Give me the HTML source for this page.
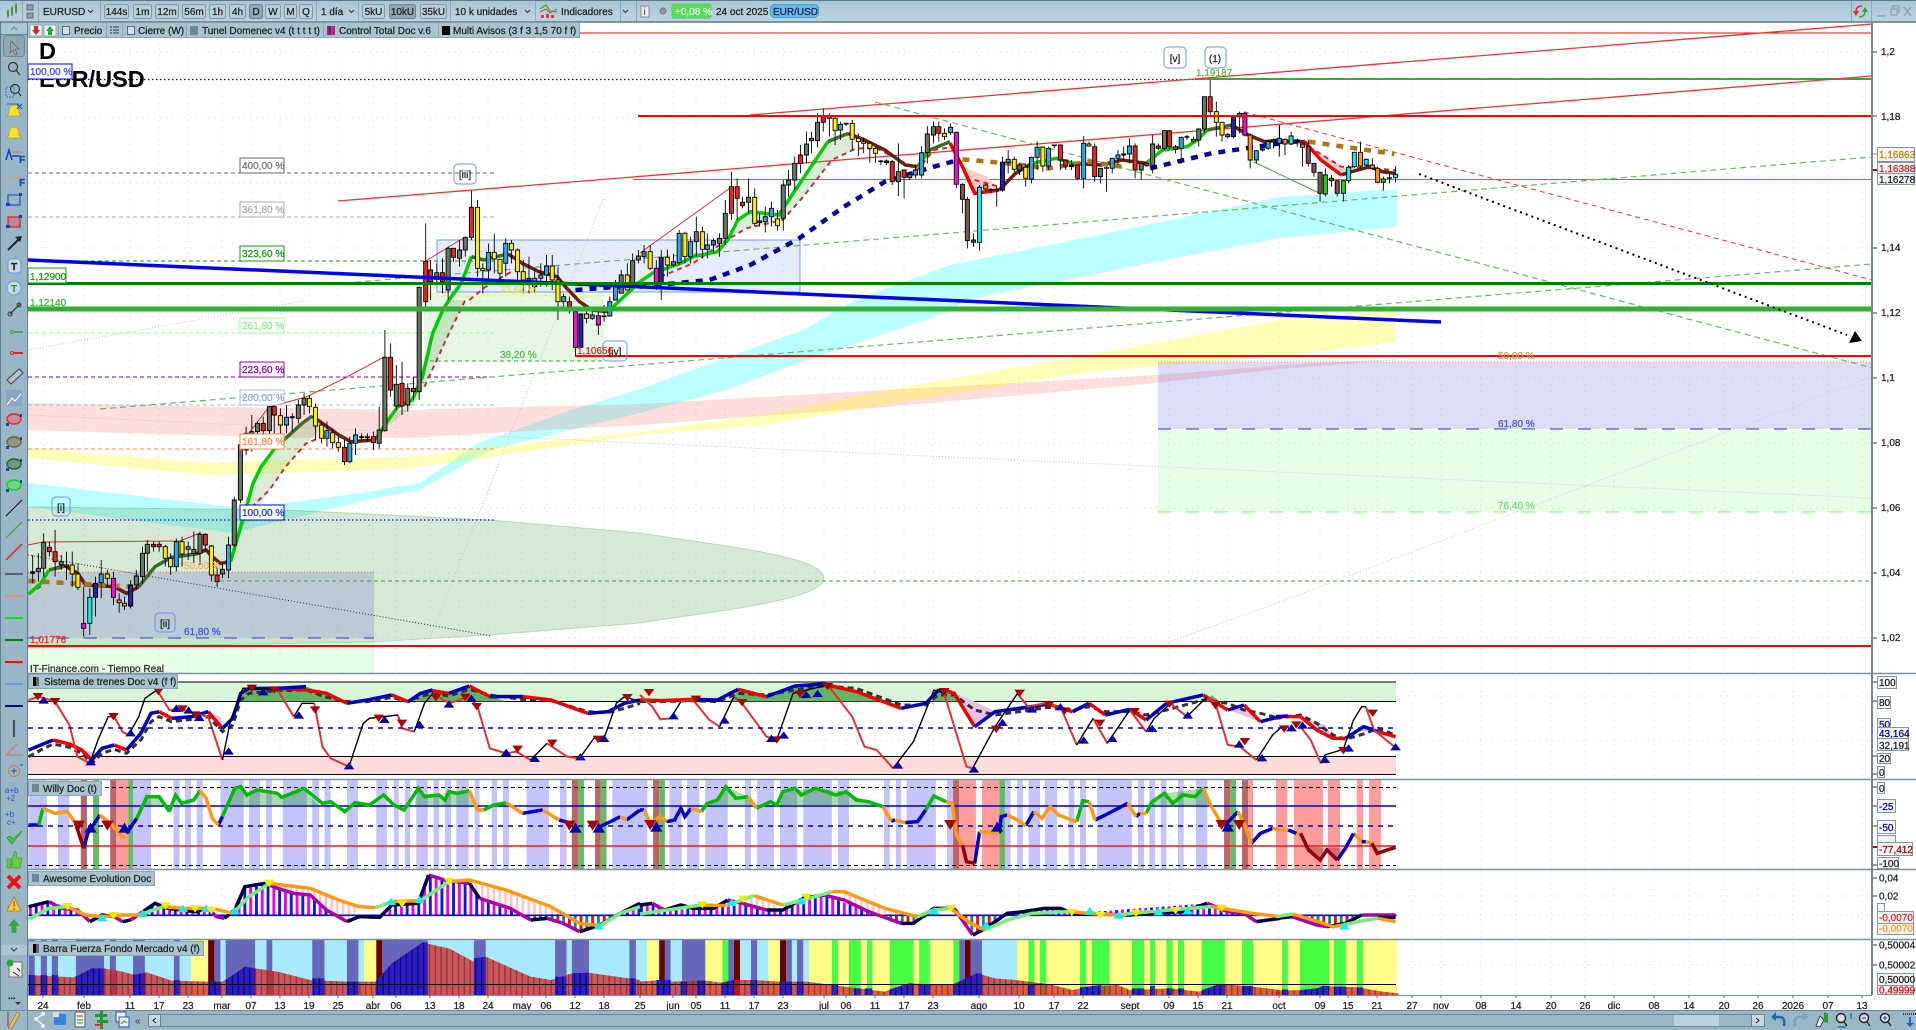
<!DOCTYPE html>
<html><head><meta charset="utf-8"><title>EURUSD</title>
<style>
html,body{margin:0;padding:0;background:#fff;overflow:hidden}
svg{display:block}
path,rect,polyline,line{vector-effect:non-scaling-stroke}
text{font:10px "Liberation Sans",sans-serif;fill:#222;stroke:#222;stroke-width:.25px}
.b{font-weight:bold}
.f{fill:none}
.cg{fill:#667766}.cr{fill:#ee2222}.cy{fill:#ffee00}.cb{fill:#2aa8e0}.cc{fill:#11eeee}.cm{fill:#ee11cc}.cn{fill:#2222aa}.cw{fill:#775555}.co{fill:#ff9911}.ck{fill:#000}.cl{fill:#11dd11}.cp{fill:#ee5599}
.btn{fill:#b7d0dc;stroke:#7f9aa8}
.lb{fill:#fff}
.ax{fill:#f4f4f4;stroke:#8397a3}
</style></head><body>
<svg xmlns="http://www.w3.org/2000/svg" width="1916" height="1030" viewBox="0 0 1916 1030">
<defs>
<linearGradient id="tb" x1="0" y1="0" x2="0" y2="1"><stop offset="0" stop-color="#a9c6d4"/><stop offset="1" stop-color="#bad4e0"/></linearGradient>
<marker id="td" markerWidth="26" markerHeight="22" refX="13" refY="11" markerUnits="userSpaceOnUse" overflow="visible"><path d="M0 0h26l-13 22z" fill="#a80000"/></marker>
<marker id="tu" markerWidth="26" markerHeight="22" refX="13" refY="11" markerUnits="userSpaceOnUse" overflow="visible"><path d="M0 22h26l-13 -22z" fill="#0000aa"/></marker>
<marker id="wd" markerWidth="30" markerHeight="30" refX="15" refY="15" markerUnits="userSpaceOnUse" overflow="visible"><path d="M0 0h30l-15 30z" fill="#a80000"/></marker>
<marker id="wu" markerWidth="30" markerHeight="30" refX="15" refY="15" markerUnits="userSpaceOnUse" overflow="visible"><path d="M0 30h30l-15 -30z" fill="#0000aa"/></marker>
<marker id="ac" markerWidth="26" markerHeight="22" refX="13" refY="11" markerUnits="userSpaceOnUse" overflow="visible"><path d="M0 22h26l-13 -22z" fill="#11eeee"/></marker>
<marker id="ay" markerWidth="26" markerHeight="22" refX="13" refY="11" markerUnits="userSpaceOnUse" overflow="visible"><path d="M0 0h26l-13 22z" fill="#eeee00"/></marker>
<pattern id="ps" width="28.4" height="10" patternUnits="userSpaceOnUse"><rect width="7" height="10" fill="#1111ee"/><rect x="14.2" width="7" height="10" fill="#ee00ee"/></pattern>
<pattern id="pp" width="14.2" height="10" patternUnits="userSpaceOnUse"><rect width="6" height="10" fill="#ffc4c4"/></pattern>
<pattern id="pn" width="28.4" height="10" patternUnits="userSpaceOnUse"><rect width="7" height="10" fill="#dd1111"/><rect x="14.2" width="7" height="10" fill="#118888"/></pattern>
<pattern id="pr" width="14.2" height="10" patternUnits="userSpaceOnUse"><rect width="14.2" height="10" fill="#cc2222" fill-opacity=".72"/><rect width="3" height="10" fill="#a81818" fill-opacity=".8"/></pattern>
<pattern id="pb" width="14.2" height="10" patternUnits="userSpaceOnUse"><rect width="14.2" height="10" fill="#1a1acc" fill-opacity=".85"/><rect width="3" height="10" fill="#0000aa"/></pattern>
</defs>

<rect width="1916" height="1030" fill="#fff"/>

<!-- grid -->
<path stroke="#dcdcdc" stroke-dasharray="1 5" fill="none" d="M43 37V995M84 37V995M130 37V995M159 37V995M188 37V995M222 37V995M251 37V995M280 37V995M309 37V995M338 37V995M373 37V995M396 37V995M430 37V995M459 37V995M488 37V995M522 37V995M546 37V995M575 37V995M604 37V995M640 37V995M673 37V995M696 37V995M725 37V995M754 37V995M783 37V995M824 37V995M846 37V995M875 37V995M904 37V995M933 37V995M979 37V995M1019 37V995M1054 37V995M1083 37V995M1130 37V995M1169 37V995M1198 37V995M1227 37V995M1279 37V995M1320 37V995M1348 37V995M1377 37V995M1412 37V995M1441 37V995M1481 37V995M1516 37V995M1551 37V995M1585 37V995M1614 37V995M1654 37V995M1689 37V995M1724 37V995M1758 37V995M1793 37V995M1828 37V995M1862 37V995M28 52H1872M28 118H1872M28 183H1872M28 248H1872M28 313H1872M28 378H1872M28 443H1872M28 508H1872M28 573H1872M28 638H1872M28 696H1872M28 741H1872M28 896H1872M28 915H1872M28 965H1872"/>

<!-- bands: real coords -->
<path fill="#bbffff" d="M28 483L233 507L286 503L367 492L420 483L478 443L510 432L571 410L640 389L734 355L803 330L856 300L950 265L1089 237L1170 220L1280 197L1397 189V227L1280 238L1130 267L966 300L946 313L815 357L726 390L640 413L490 450L420 490L367 500L245 530L233 533L28 507z"/>
<path fill="rgba(255,50,50,.16)" d="M28 403L286 408L408 410L510 407L640 404L885 390L1157 375L1280 365L1396 359V360L1280 369L1157 383L885 407L640 425L510 432L408 438L286 438L28 430z"/>
<path fill="rgba(255,255,0,.28)" d="M28 448L208 463L286 460L408 457L490 447L640 432L762 415L926 383L1089 355L1280 320L1396 312V342L1280 356L1089 372L926 398L762 425L640 435L490 457L408 468L286 473L208 475L28 458z"/>
<path fill="rgba(50,140,50,.2)" stroke="rgba(50,140,50,.25)" d="M28 507L286 510L490 520L640 533C722 546 824 556 824 578C824 600 722 610 640 623L490 635L373 642L28 648z"/>
<rect x="28" y="572" width="346" height="66" fill="rgba(85,85,215,.2)"/>
<rect x="28" y="638" width="346" height="35" fill="rgba(25,235,25,.1)"/>
<rect x="1158" y="362" width="714" height="67" fill="rgba(85,85,215,.2)"/>
<rect x="1158" y="430" width="714" height="82" fill="rgba(25,235,25,.1)"/>
<rect x="424" y="292" width="180" height="69" fill="rgba(50,170,50,.12)"/>
<rect x="437" y="240" width="363" height="52" fill="rgba(110,140,240,.17)" stroke="#6f9cf5"/>

<!-- faint dotted -->
<path fill="none" stroke="#c8c8c8" stroke-dasharray="1 2" d="M1166 643L1280 602L1872 377M28 415L640 443L1280 472L1872 498M28 350L308 300M430 638L604 197"/>
<path fill="none" stroke="#333" stroke-dasharray="1 2" d="M28 555L492 636"/>

<!-- fib lines -->
<g fill="none">
<path stroke="#666" stroke-dasharray="4 3" d="M28 173H494"/>
<path stroke="#aaa" stroke-dasharray="4 3" d="M28 217H494"/>
<path stroke="#119911" stroke-dasharray="4 3" d="M28 261H494"/>
<path stroke="#99ff99" stroke-dasharray="4 3" d="M28 333H494"/>
<path stroke="#8000aa" stroke-dasharray="4 3" d="M28 377H494"/>
<path stroke="#aabbee" stroke-dasharray="4 3" d="M28 405H494"/>
<path stroke="#ff8844" stroke-dasharray="4 3" d="M28 449H494"/>
<path stroke="#0000ff" stroke-width="1.2" stroke-dasharray="1.5 2.5" d="M28 520H494M28 79.5H1195"/>
<path stroke="#ff8844" stroke-dasharray="1 2" d="M28 572H374M1158 362H1872"/>
<path stroke="#3333cc" stroke-dasharray="13 15" d="M28 638H374M1158 429H1872"/>
<path stroke="#77ff77" stroke-dasharray="13 15" d="M1158 512H1872"/>
<path stroke="#33aa33" stroke-dasharray="4 3" d="M220 581H1872M430 361H604"/>
<path stroke="#ffff00" stroke-dasharray="4 3" d="M429 296H604"/>
</g>

<!-- trend lines -->
<g fill="none">
<path stroke="#33aa33" d="M633 179.5H1872"/>
<path stroke="#33aa33" stroke-width="2" d="M1195 79H1872"/>
<path stroke="#ff0000" d="M580 33H1872"/>
<path stroke="#ee3333" stroke-width="1.3" d="M338 201L1872 76M750 115L1872 24"/>
<path stroke="#ee3333" stroke-dasharray="5 4" d="M1244 112L1872 280"/>
<path stroke="#66bb66" stroke-width="1.2" stroke-dasharray="6 4" d="M100 409L1872 264M345 283L1872 157M875 102L1872 368"/>
<path stroke="#33aa33" d="M1254 162L1319 193"/>
<path stroke="#cc3333" d="M28 545L43 542L180 541L200 533M249 433L269 407L284 403L306 397L345 378L384 357M424 262L465 237M640 253L730 188"/>
</g>

<!-- MA left -->
<g transform="translate(0,300) scale(.40816,.33333)" fill="none">
<path fill="rgba(60,160,60,.2)" stroke="none" d="M590 680L620 550L670 450L700 415L740 370L765 348L790 370L775 400L750 430L700 500L660 570L620 650ZM945 370L1010 300L1060 100L1100 0L1140 0L1100 100L1040 260L1010 320L950 380z"/>
<path stroke="#bb3333" stroke-width="2" stroke-dasharray="5 4" d="M70 880L100 860M600 640L660 570L700 500L750 430L790 410M1040 260L1100 100L1140 0"/>
<path stroke="#00cc00" stroke-width="3.5" d="M70 883L100 850L120 810M565 785L590 680L620 550L640 500L670 450L700 415M920 420L945 370L975 320L1010 300L1035 230L1060 100L1085 30L1100 0"/>
<path stroke="#3d6b2a" stroke-width="3.5" d="M120 810L160 798M340 860L380 800L420 772L480 762M700 415L740 370L765 348"/>
<path stroke="#6b1f14" stroke-width="3.5" d="M160 798L190 820L210 855L280 860L310 880L340 860M480 762L505 750L520 770L540 790L565 785M765 348L790 370L830 405L860 425L920 420"/>
<path stroke="#aa7711" stroke-width="4.5" stroke-dasharray="7 7" d="M70 843L320 860"/>
</g>
<g transform="scale(.40816,.33333)" fill="none">
<path stroke="#bb3333" stroke-width="2" stroke-dasharray="5 4" d="M1150 900L1190 860L1260 810"/>
<path stroke="#00cc00" stroke-width="3.5" d="M1100 900L1130 850L1155 770"/>
<path stroke="#3d6b2a" stroke-width="3.5" d="M1155 770L1185 780L1215 770L1245 762"/>
<path stroke="#6b1f14" stroke-width="3.5" d="M1245 762L1280 790L1320 815L1365 830L1385 860L1420 905L1450 930L1490 935"/>
<path stroke="#00cc00" stroke-width="3.5" d="M1490 935L1520 900L1568 845"/>
<path stroke="#000099" stroke-width="4.5" stroke-dasharray="7 7" d="M1410 870L1568 855"/>
</g>
<g transform="translate(640,0) scale(.40816,.33333)" fill="none">
<path fill="rgba(60,160,60,.2)" stroke="none" d="M215 720L270 635L340 645L430 480L460 425L510 400L530 445L470 480L400 590L350 660L260 685Z"/>
<path fill="#ffcccc" stroke="none" d="M790 500L820 580L880 570L850 530z"/>
<path stroke="#bb3333" stroke-width="2" stroke-dasharray="5 4" d="M50 830L130 790L200 730L260 685L350 660L400 590L470 480L530 445L580 445L620 470L680 510L720 450L770 440M820 540L880 560"/>
<path stroke="#00cc00" stroke-width="3.5" d="M0 845L30 820L100 790L130 770L190 755L215 720L240 660L270 635L340 645L375 580L430 480L460 425M680 500L710 450M960 490L1020 475L1060 490M1240 490L1280 450L1340 440L1365 420L1390 390"/>
<path stroke="#3d6b2a" stroke-width="3.5" d="M460 425L510 400M710 450L760 425M1390 390L1450 375"/>
<path stroke="#6b1f14" stroke-width="3.5" d="M510 400L550 420L600 450L650 495L680 500M880 570L920 520L960 490M1060 490L1130 495L1180 480L1240 490M1450 375L1490 405L1530 425L1568 420"/>
<path stroke="#ee0000" stroke-width="3.5" d="M760 430L790 500L820 580L880 570"/>
<path stroke="#000099" stroke-width="4.5" stroke-dasharray="7 7" d="M0 860L170 840L270 795L390 715L500 620L600 545L720 500L780 480M1250 505L1400 460L1568 430"/>
<path stroke="#aa7711" stroke-width="4.5" stroke-dasharray="7 7" d="M790 478L900 490L1000 505L1100 485L1180 500"/>
</g>
<g transform="translate(1276,0) scale(.40816,.33333)" fill="none">
<path fill="#ffcccc" stroke="none" d="M80 440L110 480L160 525L185 515L150 490L110 460z"/>
<path stroke="#bb3333" stroke-width="2" stroke-dasharray="5 4" d="M80 440L160 500L293 510"/>
<path stroke="#6b1f14" stroke-width="3.5" d="M0 425L70 425M160 525L185 515L230 500L260 515L293 520"/>
<path stroke="#ee0000" stroke-width="3.5" d="M70 425L110 480L160 525"/>
<path stroke="#000099" stroke-width="4.5" stroke-dasharray="7 7" d="M0 425L70 425"/>
<path stroke="#aa7711" stroke-width="4.5" stroke-dasharray="7 7" d="M80 425L290 462"/>
</g>

<!-- candles -->
<g transform="translate(0,300) scale(.40816,.33333)" stroke="#000" stroke-width=".9">
<path fill="none" d="M80 765V850M94 760V845M107 700V830M121 725V770M135 690V830M150 765V810M163 755V840M177 755V860M191 790V870M205 860V1010M220 865V1005M234 830V950M248 780V895M263 810V860M278 815V915M292 880V938M305 890V930M320 840V925M334 810V870M349 740V850M361 720V815M376 725V755M390 725V755M405 735V800M418 760V825M432 715V815M446 710V800M461 725V780M475 695V790M490 695V795M503 700V755M518 735V845M532 800V860M545 790V835M560 710V835M574 590V740M589 430V610M603 380V465M617 345V455M631 365V435M645 350V440M660 320V420M672 320V400M687 325V410M702 315V400M716 340V395M731 300V370M745 280V345M758 285V340M773 310V420M788 365V430M801 365V440M815 385V445M829 410V455M844 420V495M857 410V490M871 385V465M886 400V420M900 400V425M915 395V450M929 320V445M943 90V395M957 130V290M971 195V330M985 185V345M999 250V335M1013 230V300M1027 -40V300M1395 -10V40M1410 30V165M1423 40V142M1437 20V70M1451 20V60M1466 35V105M1480 15V65M1494 -10V48"/>
<path class="cg" d="M94 805h5V815h-10V805zM107 727h5V805h-10V727zM150 785h5V795h-10V785zM163 795h5V800h-10V795zM334 828h5V855h-10V828zM349 760h5V830h-10V760zM361 733h5V760h-10V733zM475 748h5V760h-10V748zM490 703h5V760h-10V703zM545 808h5V822h-10V808zM574 600h5V735h-10V600zM589 435h5V600h-10V435zM603 400h5V450h-10V400zM617 395h5V420h-10V395zM631 370h5V395h-10V370zM660 320h5V392h-10V320zM731 315h5V355h-10V315zM745 295h5V315h-10V295zM929 390h5V430h-10V390zM943 172h5V392h-10V172zM971 253h5V318h-10V253zM999 265h5V315h-10V265zM1027 -38h5V275h-10V-38z"/>
<path class="cr" d="M121 742h5V755h-10V742zM135 755h5V785h-10V755zM376 733h5V740h-10V733zM390 733h5V740h-10V733zM503 703h5V735h-10V703zM532 825h5V845h-10V825zM645 370h5V392h-10V370zM672 320h5V345h-10V320zM844 442h5V485h-10V442zM915 410h5V428h-10V410zM957 172h5V270h-10V172zM985 250h5V318h-10V250zM1013 265h5V275h-10V265zM1395 5h5V25h-10V5z"/>
<path class="cy" d="M177 795h5V822h-10V795zM191 822h5V862h-10V822zM263 822h5V835h-10V822zM405 740h5V775h-10V740zM418 775h5V800h-10V775zM446 725h5V762h-10V725zM518 738h5V825h-10V738zM687 347h5V375h-10V347zM758 295h5V320h-10V295zM773 322h5V378h-10V322zM788 375h5V415h-10V375zM815 398h5V428h-10V398zM829 428h5V442h-10V428zM1437 42h5V55h-10V42z"/>
<path class="cb" d="M248 822h5V848h-10V822zM432 725h5V800h-10V725zM461 740h5V748h-10V740zM560 735h5V810h-10V735zM702 352h5V375h-10V352zM801 392h5V415h-10V392zM857 430h5V485h-10V430zM871 405h5V430h-10V405zM1451 45h5V55h-10V45zM1494 5h5V48h-10V5z"/>
<path class="cc" d="M220 892h5V970h-10V892z"/>
<path class="cm" d="M205 970h5V985h-10V970zM278 835h5V892h-10V835zM1410 35h5V142h-10V35zM1466 47h5V75h-10V47z"/>
<path class="cn" d="M234 850h5V892h-10V850zM320 855h5V918h-10V855zM1423 42h5V142h-10V42z"/>
<path class="co" d="M292 900h5V908h-10V900zM305 910h5V918h-10V910z"/>
<path class="ck" d="M80 815h5V820h-10V815zM716 350h5V353h-10V350zM886 410h5V413h-10V410zM900 410h5V413h-10V410zM1480 48h5V50h-10V48z"/>
</g>
<g transform="scale(.40816,.33333)" stroke="#000" stroke-width=".9">
<path fill="none" d="M1043 670V920M1055 780V900M1070 790V850M1084 775V880M1098 740V900M1111 745V785M1126 720V800M1140 710V770M1155 572V720M1170 600V830M1183 790V880M1197 730V850M1211 700V820M1225 780V850M1239 715V830M1253 720V790M1268 745V850M1282 780V880M1296 770V880M1310 805V880M1325 790V860M1339 765V860M1353 765V870M1367 800V960M1381 880V920M1508 840V900M1522 810V880M1537 790V870M1550 760V850M1564 750V790"/>
<path class="cr" d="M1043 785h5V905h-10V785zM1055 810h5V845h-10V810zM1084 818h5V845h-10V818zM1111 745h5V772h-10V745zM1155 622h5V712h-10V622z"/>
<path class="cg" d="M1070 818h5V838h-10V818zM1098 745h5V870h-10V745zM1126 750h5V775h-10V750zM1140 712h5V750h-10V712zM1522 825h5V880h-10V825zM1550 782h5V850h-10V782zM1564 768h5V780h-10V768z"/>
<path class="cy" d="M1170 622h5V805h-10V622zM1183 805h5V812h-10V805zM1211 757h5V777h-10V757zM1225 778h5V820h-10V778zM1253 730h5V750h-10V730zM1268 750h5V815h-10V750zM1282 815h5V840h-10V815zM1353 798h5V840h-10V798zM1367 840h5V905h-10V840zM1537 825h5V870h-10V825z"/>
<path class="cb" d="M1197 757h5V810h-10V757zM1239 730h5V790h-10V730zM1296 835h5V840h-10V835zM1310 835h5V860h-10V835zM1325 825h5V835h-10V825zM1339 798h5V825h-10V798zM1381 890h5V905h-10V890zM1508 860h5V900h-10V860z"/>
</g>
<g transform="translate(640,0) scale(.40816,.33333)" stroke="#000" stroke-width=".9">
<path fill="none" d="M10 735V790M25 735V810M40 780V870M52 750V900M67 748V830M82 762V800M96 690V795M110 695V790M124 710V790M138 650V770M153 680V775M165 700V775M180 715V760M195 700V770M209 600V735M224 515V660M238 535V660M251 590V625M266 535V640M281 565V680M293 640V680M307 620V697M322 605V680M337 630V692M351 540V692M364 510V590M379 470V570M393 435V520M408 395V490M420 395V460M435 340V442M449 325V395M464 340V410M478 345V435M491 365V420M505 368V378M520 360V450M535 400V468M548 412V460M563 425V488M577 440V488M590 480V495M604 478V495M618 480V555M633 430V588M647 510V595M661 515V540M675 500V535M690 438V535M704 378V490M719 365V430M732 365V425M746 385V420M761 370V405M775 395V565M790 550V640M802 590V745M817 700V740M832 555V752M847 550V575M860 565V580M874 560V620M888 470V575M902 450V520M917 470V520M930 490V525M945 490V560M959 470V550M973 425V510M987 440V515M1001 440V510M1015 435V445M1030 435V510M1043 480V510M1057 480V510M1072 495V540M1087 408V565M1100 425V440M1114 430V545M1128 505V550M1143 500V575M1157 475V520M1171 450V495M1185 440V480M1199 415V490M1213 430V535M1228 490V540M1242 485V500M1256 405V520M1270 430V450M1285 392V450M1297 390V450M1312 435V460M1326 410V490M1340 405V420M1356 410V430M1369 385V440M1383 290V400M1397 240V345M1412 305V410M1426 365V425M1440 400V415M1454 350V415M1469 335V400M1482 335V410M1495 400V505M1510 450V490M1525 445V455M1539 420V450M1552 415V445M1567 375V445"/>
<path class="cg" d="M10 755h5V770h-10V755zM82 785h5V795h-10V785zM138 695h5V725h-10V695zM180 722h5V735h-10V722zM195 715h5V730h-10V715zM209 640h5V715h-10V640zM266 592h5V607h-10V592zM293 663h5V668h-10V663zM351 555h5V655h-10V555zM364 540h5V555h-10V540zM379 490h5V540h-10V490zM408 432h5V465h-10V432zM420 415h5V422h-10V415zM435 367h5V422h-10V367zM633 515h5V545h-10V515zM661 523h5V533h-10V523zM704 402h5V458h-10V402zM719 380h5V405h-10V380zM1128 505h5V530h-10V505zM1228 490h5V510h-10V490zM1256 432h5V497h-10V432zM1285 392h5V445h-10V392zM1369 387h5V420h-10V387zM1383 290h5V387h-10V290zM1469 340h5V350h-10V340zM1552 420h5V425h-10V420z"/>
<path class="cr" d="M224 560h5V640h-10V560zM238 560h5V595h-10V560zM251 607h5V617h-10V607zM393 465h5V490h-10V465zM449 350h5V367h-10V350zM464 347h5V355h-10V347zM618 485h5V545h-10V485zM647 510h5V532h-10V510zM732 380h5V400h-10V380zM1030 435h5V480h-10V435zM1043 480h5V498h-10V480zM1072 495h5V535h-10V495zM1114 440h5V530h-10V440zM1213 438h5V510h-10V438zM1242 490h5V497h-10V490zM1270 438h5V445h-10V438zM1297 392h5V440h-10V392zM1312 440h5V448h-10V440zM1397 290h5V335h-10V290z"/>
<path class="cy" d="M25 755h5V805h-10V755zM67 772h5V795h-10V772zM110 700h5V770h-10V700zM153 695h5V748h-10V695zM281 592h5V670h-10V592zM337 657h5V677h-10V657zM478 355h5V392h-10V355zM520 370h5V418h-10V370zM535 415h5V425h-10V415zM548 425h5V430h-10V425zM563 430h5V445h-10V430zM577 445h5V460h-10V445zM746 400h5V410h-10V400zM917 478h5V508h-10V478zM945 502h5V535h-10V502zM987 442h5V498h-10V442zM1100 432h5V438h-10V432zM1356 418h5V423h-10V418zM1412 335h5V367h-10V335zM1426 367h5V405h-10V367z"/>
<path class="cb" d="M96 700h5V788h-10V700zM124 725h5V770h-10V725zM165 735h5V748h-10V735zM307 650h5V665h-10V650zM322 625h5V650h-10V625zM491 373h5V390h-10V373zM675 510h5V525h-10V510zM690 458h5V525h-10V458zM761 382h5V398h-10V382zM902 478h5V487h-10V478zM959 472h5V537h-10V472zM973 442h5V472h-10V442zM1001 445h5V498h-10V445zM1087 430h5V535h-10V430zM1157 475h5V505h-10V475zM1171 465h5V475h-10V465zM1199 438h5V462h-10V438zM1326 412h5V445h-10V412zM1510 452h5V480h-10V452zM1539 425h5V445h-10V425zM1567 418h5V430h-10V418z"/>
<path class="cm" d="M40 805h5V850h-10V805zM775 397h5V553h-10V397zM1440 403h5V410h-10V403zM1482 340h5V405h-10V340z"/>
<path class="cn" d="M52 772h5V850h-10V772zM888 487h5V570h-10V487zM1454 350h5V410h-10V350z"/>
<path class="cw" d="M790 553h5V598h-10V553zM802 598h5V722h-10V598zM817 720h5V727h-10V720zM930 495h5V510h-10V495z"/>
<path class="cc" d="M832 562h5V727h-10V562z"/>
<path class="co" d="M847 555h5V567h-10V555zM860 568h5V570h-10V568zM1495 405h5V480h-10V405z"/>
<path class="ck" d="M505 370h5V372h-10V370zM590 483h5V485h-10V483zM604 483h5V488h-10V483zM874 568h5V570h-10V568zM1015 435h5V437h-10V435zM1057 495h5V500h-10V495zM1143 503h5V505h-10V503zM1185 462h5V465h-10V462zM1340 410h5V412h-10V410zM1525 447h5V450h-10V447z"/>
</g>
<g transform="translate(1276,0) scale(.40816,.33333)" stroke="#000" stroke-width=".9">
<path fill="none" d="M8 375V470M22 415V465M37 395V435M52 415V440M65 430V500M79 420V500M93 490V530M108 515V605M121 505V590M136 525V560M150 540V590M165 540V605M178 495V550M192 455V505M207 425V505M221 475V500M236 475V510M249 500V550M263 530V572M278 520V550M293 498V548"/>
<path class="cw" d="M79 440h5V490h-10V440zM93 490h5V517h-10V490zM108 517h5V580h-10V517zM136 535h5V542h-10V535zM150 542h5V580h-10V542z"/>
<path class="co" d="M22 418h5V432h-10V418zM207 457h5V498h-10V457zM236 495h5V505h-10V495zM249 505h5V547h-10V505z"/>
<path class="cb" d="M8 415h5V430h-10V415z"/>
<path class="cc" d="M37 408h5V432h-10V408zM178 502h5V542h-10V502zM192 457h5V500h-10V457zM221 478h5V495h-10V478zM293 523h5V533h-10V523z"/>
<path class="cl" d="M121 525h5V582h-10V525zM165 542h5V580h-10V542zM263 537h5V547h-10V537z"/>
<path class="ck" d="M52 420h5V425h-10V420zM278 533h5V535h-10V533z"/>
<path class="cp" d="M65 432h5V442h-10V432z"/>
</g>

<!-- big horizontals over candles -->
<g fill="none">
<path stroke="#ff0000" stroke-width="2" d="M638 116H1872M575 356H1872M28 646H1872"/>
<path stroke="#0000ee" stroke-width="3.5" d="M28 260L1441 322"/>
<path stroke="#008000" stroke-width="3" d="M28 283.5H1872"/>
<path stroke="#33b033" stroke-width="5" d="M28 309H1872"/>
<path stroke="#000" stroke-width="2" stroke-dasharray="2 4" d="M1419 174L1847 335"/>
</g>
<path d="M1855 331L1862 341L1849 343z" fill="#000"/>

<!-- chart text labels -->
<text x="39" y="59" class="b" style="font-size:23.5px;fill:#000;stroke:none">D</text>
<text x="39" y="87" class="b" style="font-size:23.5px;fill:#000;stroke:none">EUR/USD</text>

<g>
<rect x="28" y="64" width="44" height="15" fill="#fff" stroke="#0000ff"/><text x="30" y="75" style="fill:#3344ff;stroke:#3344ff">100,00 %</text>
<rect x="240" y="158" width="44" height="15" fill="#fff" stroke="#666"/><text x="242" y="169" style="fill:#777;stroke:#777">400,00 %</text>
<rect x="240" y="202" width="44" height="15" fill="#fff" stroke="#aaa"/><text x="242" y="213" style="fill:#aaa;stroke:#aaa">361,80 %</text>
<rect x="240" y="246" width="44" height="15" fill="#fff" stroke="#119911"/><text x="242" y="257" style="fill:#119911;stroke:#119911">323,60 %</text>
<rect x="240" y="318" width="44" height="15" fill="#fff" stroke="#99ff99"/><text x="242" y="329" style="fill:#88ee88;stroke:#88ee88">261,80 %</text>
<rect x="240" y="362" width="44" height="15" fill="#fff" stroke="#8000aa"/><text x="242" y="373" style="fill:#8000aa;stroke:#8000aa">223,60 %</text>
<rect x="240" y="390" width="44" height="15" fill="rgba(255,255,255,.5)" stroke="#aabbee"/><text x="242" y="401" style="fill:#99a8cc;stroke:#99a8cc">200,00 %</text>
<rect x="240" y="434" width="44" height="15" fill="#fff" stroke="#ff8844"/><text x="242" y="445" style="fill:#ff8844;stroke:#ff8844">161,80 %</text>
<rect x="240" y="505" width="44" height="15" fill="#fff" stroke="#0000ff"/><text x="242" y="516" style="fill:#1133ff;stroke:#1133ff">100,00 %</text>
<rect x="28" y="268" width="38" height="15" fill="#fff" stroke="#119911"/><text x="30" y="280" style="fill:#119911;stroke:#119911">1,12900</text>
<text x="30" y="306" style="fill:#33bb33;stroke:#33bb33">1,12140</text>
<text x="30" y="643" style="fill:#ee2222;stroke:#ee2222">1,01776</text>
<text x="1196" y="76" style="fill:#66bb44;stroke:#66bb44">1,19187</text>
<text x="500" y="293" style="fill:#e6e633;stroke:#e6e633">23,60 %</text>
<text x="500" y="358" style="fill:#55bb55;stroke:#55bb55">38,20 %</text>
<text x="184" y="569" style="fill:#ffaa66;stroke:#ffaa66">50,00 %</text>
<text x="184" y="635" style="fill:#4455cc;stroke:#4455cc">61,80 %</text>
<text x="1498" y="359" style="fill:#ff8844;stroke:#ff8844">50,00 %</text>
<text x="1498" y="427" style="fill:#4455cc;stroke:#4455cc">61,80 %</text>
<text x="1498" y="509" style="fill:#77dd77;stroke:#77dd77">76,40 %</text>
<text x="30" y="672" style="fill:#333">IT-Finance.com - Tiempo Real</text>
</g>
<g fill="none" stroke="#6699ee">
<rect x="454" y="164" width="22" height="20" rx="4"/><rect x="1164" y="47" width="22" height="21" rx="4"/><rect x="1205" y="47" width="21" height="21" rx="4"/><rect x="52" y="497" width="18" height="19" rx="4"/><rect x="155" y="613" width="20" height="19" rx="4"/><rect x="603" y="341" width="24" height="20" rx="4"/>
</g>
<text x="465" y="178" text-anchor="middle">[iii]</text><text x="1175" y="62" text-anchor="middle">[v]</text><text x="1215" y="62" text-anchor="middle">(1)</text><text x="61" y="511" text-anchor="middle">[i]</text><text x="165" y="627" text-anchor="middle">[ii]</text><text x="615" y="355" text-anchor="middle">[iv]</text>
<text x="577" y="354" style="fill:#ee2222;stroke:#ee2222">1,10656</text>

<!-- pane 2 -->
<rect x="28" y="682" width="1368" height="19" fill="#d8f5d8"/>
<rect x="28" y="756" width="1368" height="18" fill="#ffdcdc"/>
<path fill="none" stroke="#000" d="M28 682H1396M28 701.5H1396M28 756.5H1396M28 774.5H1396"/>
<g transform="translate(0,660) scale(.40816,.33333)" fill="none">
<path fill="#66b366" d="M590 124L590 100L610 85L680 85L750 80L800 100L840 124zM1020 124L1030 100L1060 90L1100 100L1150 78L1200 110L1240 124z"/>
<path fill="#e8c0e8" d="M510 155L545 205L540 170zM225 300L200 270L245 280zM1440 160L1350 120L1410 140z"/>
<path stroke="#333" stroke-width="3" stroke-dasharray="6 4" d="M70 290L100 270L130 252L170 262L200 280L225 310L250 280L280 268L310 280L345 240L370 185L390 170L420 185L470 178L510 170L545 215L570 195L590 120L610 100L680 92L750 90L800 112L850 125L900 125L960 112L1000 125L1030 110L1060 100L1100 108L1150 88L1200 105L1280 118L1350 122L1440 155L1490 158L1530 145L1568 130"/>
<path stroke="#ee0000" stroke-width="3.5" d="M130 240L170 252L200 270L225 300M280 255L310 270M390 155L420 175M510 155L545 205M680 85L750 90L800 100L850 130M960 105L1000 125M1060 92L1100 100M1150 78L1200 110L1280 110L1350 120L1440 160"/>
<path stroke="#0000bb" stroke-width="3.5" d="M70 270L100 255L130 240M225 300L250 265L280 255M310 270L345 220L370 160L390 155M420 175L470 170L510 155M545 205L570 175L590 100L610 85L680 85L750 80M850 130L900 120L960 105M1000 125L1030 100L1060 90M1100 100L1150 78M1200 110L1280 110M1440 160L1490 155L1530 130L1568 120"/>
<path stroke="#dd3333" stroke-width="2" d="M70 120L95 110L135 125L170 195L190 290L220 310M280 170L300 215L315 225M385 90L415 150L450 150L490 165L510 170L545 300M680 90L720 170M770 130L790 260L810 295L855 320M975 165L985 205L1015 215M1060 100L1100 130L1150 110L1170 140L1200 265L1240 280L1265 275L1300 300M1340 250L1390 290L1420 295"/>
<path stroke="#000" stroke-width="1.4" d="M220 310L240 240L265 170L280 170M315 225L340 170L355 115L385 90M545 300L565 180L595 85L620 85L680 90M720 170L740 130L770 130M855 320L890 190L905 175L975 165M1015 215L1040 130L1060 100M1300 300L1340 250M1420 295L1455 235L1480 235L1510 130L1530 110L1568 125"/>
<polyline stroke="none" points="93,110 135,125 278,170 388,95 447,147 478,165 617,85 672,90 772,150 928,175 985,190 1068,113 1140,112 1168,140 1268,268 1353,250 1465,238 1537,113" marker-start="url(#td)" marker-mid="url(#td)" marker-end="url(#td)"/>
<polyline stroke="none" points="107,120 222,305 320,218 432,145 462,150 488,172 560,273 645,95 732,165 855,317 942,178 1028,193 1100,132 1155,115 1240,277 1310,295 1422,290 1480,235" marker-start="url(#tu)" marker-mid="url(#tu)" marker-end="url(#tu)"/>
</g>
<g transform="translate(640,660) scale(.40816,.33333)" fill="none">
<path fill="#66b366" d="M220 124L240 88L310 110L380 78L450 72L530 95L610 124zM715 124L730 92L770 100L790 124zM1390 124L1400 105L1420 124z"/>
<path fill="#e8c0e8" d="M770 100L820 200L870 155L830 130zM1440 150L1520 185L1480 145zM1240 180L1200 150L1230 155z"/>
<path stroke="#333" stroke-width="3" stroke-dasharray="6 4" d="M0 125L50 125L130 122L190 125L240 100L310 105L380 90L450 78L530 85L640 135L700 135L730 105L770 105L820 150L870 165L960 150L1000 142L1060 150L1100 140L1140 155L1200 155L1240 165L1290 150L1380 120L1440 130L1480 150L1520 160L1568 175"/>
<path stroke="#ee0000" stroke-width="3.5" d="M0 120L50 122L130 118M240 88L310 110M450 72L530 95L640 145M750 92L770 100L820 200M1000 132L1060 155M1100 130L1140 165M1200 148L1240 180M1380 105L1440 150M1480 135L1520 185"/>
<path stroke="#0000bb" stroke-width="3.5" d="M130 118L190 120L240 88M310 110L380 78L450 72M640 145L700 130L730 92L750 92M820 200L870 155L960 140L1000 132M1060 155L1100 130M1140 165L1200 148M1240 180L1290 130L1380 105M1440 150L1480 135M1520 185L1568 170"/>
<path stroke="#dd3333" stroke-width="2" d="M0 105L30 140L50 178L75 175M100 125L130 120L170 180L195 200M230 110L250 130L310 230L335 240M460 75L520 170L550 260L580 270L620 325M745 100L800 320L815 325M925 100L950 140L990 130L1030 140L1070 255M1110 175L1145 250M1200 150L1240 215M1300 130L1340 170M1390 110L1410 130L1440 255L1470 260L1510 300"/>
<path stroke="#000" stroke-width="1.4" d="M75 175L100 125M195 200L230 110M335 240L375 100L460 75M620 325L670 245L720 90L745 100M815 325L870 200L925 100M1070 255L1110 175M1145 250L1200 150M1240 215L1260 175L1300 130M1340 170L1390 110M1510 300L1550 225L1568 205"/>
<polyline stroke="none" points="22,98 137,118 250,128 335,240 392,103 460,80 745,95 873,208 930,100 1002,135 1040,153 1127,190 1212,155 1297,133 1410,137 1482,245" marker-start="url(#td)" marker-mid="url(#td)" marker-end="url(#td)"/>
<polyline stroke="none" points="82,167 207,180 322,235 352,225 407,103 435,100 632,315 818,327 888,187 960,147 1030,140 1087,240 1157,235 1255,205 1342,165 1468,252 1524,293" marker-start="url(#tu)" marker-mid="url(#tu)" marker-end="url(#tu)"/>
</g>
<g transform="translate(1276,660) scale(.40816,.33333)" fill="none">
<path fill="#e8c0e8" d="M60 170L100 210L140 235L120 195zM215 200L250 215L200 215z"/>
<path stroke="#333" stroke-width="3" stroke-dasharray="6 4" d="M0 175L60 165L100 190L140 225L170 238L215 222L250 205L293 225"/>
<path stroke="#ee0000" stroke-width="3.5" d="M0 170L60 170L100 210L140 235L170 235M250 215L293 230"/>
<path stroke="#0000bb" stroke-width="3.5" d="M170 235L215 200L250 215M0 170L30 168"/>
<path stroke="#dd3333" stroke-width="2" d="M60 200L85 240L110 310M220 140L240 210L290 260"/>
<path stroke="#000" stroke-width="1.4" d="M110 310L120 285L165 268L190 180L210 140L220 140"/>
<polyline stroke="none" points="20,207 50,195 165,272 237,160" marker-start="url(#td)" marker-mid="url(#td)" marker-end="url(#td)"/>
<polyline stroke="none" points="38,203 65,195 120,298 178,264 293,260" marker-start="url(#tu)" marker-mid="url(#tu)" marker-end="url(#tu)"/>
</g>
<path stroke="#0000cc" stroke-width="1.6" stroke-dasharray="5 5" fill="none" d="M28 728H1396"/>

<!-- pane 3 stripes -->
<g transform="translate(0,660) scale(.40816,.33333)" fill="none" stroke-width="90">
<path stroke="#c4c4fa" d="M70 492H115M142 492H170M326 492H370M425 492H440M453 492H468M482 492H497M540 492H597M610 492H637M652 492H666M693 492H752M765 492H782M795 492H810M850 492H877M922 492H948M965 492H977M992 492H1005M1020 492H1048M1062 492H1076M1090 492H1105M1118 492H1148M1163 492H1175M1205 492H1218M1232 492H1247M1290 492H1345M1372 492H1388M1500 492H1568"/>
<path stroke="#bb6666" d="M198 492H213M270 492H285M1401 492H1416M1458 492H1472"/>
<path stroke="#66bb66" d="M228 492H243M314 492H326M1416 492H1431M1472 492H1486"/>
<path stroke="#ff9d9d" d="M285 492H314"/>
</g>
<g transform="translate(640,660) scale(.40816,.33333)" fill="none" stroke-width="90">
<path stroke="#c4c4fa" d="M0 492H18M72 492H102M115 492H145M160 492H215M257 492H272M287 492H328M343 492H385M400 492H470M485 492H512M598 492H612M627 492H640M653 492H725M752 492H767M894 492H908M924 492H938M952 492H980M992 492H1022M1050 492H1064M1078 492H1093M1120 492H1205M1220 492H1235M1248 492H1262M1276 492H1290M1318 492H1332M1362 492H1390"/>
<path stroke="#bb6666" d="M32 492H47M767 492H782M1431 492H1446M1475 492H1490"/>
<path stroke="#66bb66" d="M47 492H61M880 492H894M1446 492H1460"/>
<path stroke="#ff9d9d" d="M782 492H823M838 492H880M1490 492H1502M1558 492H1568"/>
</g>
<g transform="translate(1276,660) scale(.40816,.33333)" fill="none" stroke-width="90">
<path stroke="#ff9d9d" d="M0 492H28M44 492H115M127 492H157M198 492H213M228 492H257"/>
</g>
<g fill="none">
<path stroke="#000" stroke-dasharray="4 3" d="M28 787.5H1396M28 865.5H1396"/>
<path stroke="#0000bb" stroke-width="1.5" d="M28 806H1396"/>
<path stroke="#0000bb" stroke-width="1.6" stroke-dasharray="5 5" d="M28 826H1396"/>
<path stroke="#dd2222" stroke-width="1.5" d="M28 846H1396"/>
</g>
<g transform="translate(0,660) scale(.40816,.33333)" fill="none">
<path fill="rgba(0,130,0,.3)" d="M345 438L360 410L390 410L410 438zM555 438L575 385L590 380L605 405L630 390L680 400L690 412L745 385L780 438zM1015 438L1025 385L1040 410L1075 405L1090 420L1100 395L1150 392L1165 438z"/>
<path stroke="#0000cc" stroke-width="3.5" d="M70 495L95 495M215 520L245 465M310 520L335 475M535 495L545 470M205 565L215 520M1280 460L1330 450M1370 480L1400 490M1470 500L1520 470M1535 480L1568 450"/>
<path stroke="#00bb00" stroke-width="3.5" d="M95 495L105 445M335 475L360 410L390 410L415 455M415 455L430 405L445 430L475 420L490 392M545 470L575 385L590 380L605 405L630 390L680 400L690 412L745 385L790 430L810 425L845 455L870 428L905 435L940 405L965 435L990 450L1025 385L1040 410L1075 405L1090 420L1100 395L1120 400L1150 392M1185 450L1210 435L1240 428"/>
<path stroke="#ff9911" stroke-width="3.5" d="M105 445L135 460L165 455L185 490M245 465L270 490L305 535M490 392L505 415L520 475L535 495M1150 392L1170 450L1185 450M1240 428L1280 460M1330 450L1370 480M1520 470L1535 480"/>
<path stroke="#8b0000" stroke-width="3.5" d="M185 490L205 565"/>
<polyline stroke="none" points="193,497 263,497 1395,497 1452,497" marker-start="url(#wd)" marker-mid="url(#wd)" marker-end="url(#wd)"/>
<polyline stroke="none" points="222,503 305,503 1410,503 1467,503" marker-start="url(#wu)" marker-mid="url(#wu)" marker-end="url(#wu)"/>
</g>
<g transform="translate(640,660) scale(.40816,.33333)" fill="none">
<path fill="rgba(0,130,0,.3)" d="M170 438L210 380L265 410L280 438zM340 438L350 395L430 385L505 395L575 438zM1240 438L1285 400L1380 385L1400 438z"/>
<path stroke="#0000cc" stroke-width="3.5" d="M0 450L10 450M65 485L85 480L100 445L110 470L125 445M615 483L625 480M650 488L680 485L700 450M820 610L832 515M880 520L885 470L900 465M945 497L965 455M1115 480L1140 465L1195 430M1215 470L1225 460M1430 500L1465 455M1498 550L1520 520L1550 505"/>
<path stroke="#00bb00" stroke-width="3.5" d="M150 455L165 430L190 420L210 380L235 415L265 410M285 445L320 425L335 435L350 395L380 385L395 405L430 385L480 405L505 395L530 420L560 425L595 440M700 450L720 408L750 425M1070 485L1085 422L1100 425M1240 460L1255 425L1285 400L1305 430L1330 405L1360 410L1380 385"/>
<path stroke="#ff9911" stroke-width="3.5" d="M10 450L25 490L50 470L65 485M125 445L150 455M265 410L285 445M595 440L615 483M625 480L650 488M750 425L765 430L775 525L790 555M832 515L880 520M900 465L925 480L945 497M965 455L985 475L1005 440L1025 465L1070 485M1100 425L1115 480M1195 430L1215 470M1225 460L1240 460M1380 385L1400 440L1430 500M1465 455L1480 490L1498 550M1550 505L1568 510"/>
<path stroke="#8b0000" stroke-width="3.5" d="M790 555L800 605L820 610"/>
<polyline stroke="none" points="25,495 760,495 1425,495 1468,495" marker-start="url(#wd)" marker-mid="url(#wd)" marker-end="url(#wd)"/>
<polyline stroke="none" points="40,500 875,500 1440,500" marker-start="url(#wu)" marker-mid="url(#wu)" marker-end="url(#wu)"/>
</g>
<g transform="translate(1276,660) scale(.40816,.33333)" fill="none">
<path fill="rgba(120,0,0,.3)" d="M62 555L108 600L125 570L150 600L170 565L62 560z"/>
<path stroke="#ff9911" stroke-width="3.5" d="M0 510L30 510M50 520L60 520M190 520L210 545M220 545L235 550"/>
<path stroke="#0000cc" stroke-width="3.5" d="M30 510L50 520M150 600L170 565L190 520M210 545L220 545"/>
<path stroke="#8b0000" stroke-width="3.5" d="M60 520L80 570L108 600L125 570L150 600M235 550L248 580L293 562"/>
</g>

<!-- pane 4 -->
<g transform="translate(0,660) scale(.40816,.33333)" fill="none">
<path fill="url(#ps)" d="M70 766V740L120 725L190 750L210 766zM350 766L380 730L410 745L480 755L510 745L530 766zM575 766L600 680L650 670L720 700L760 705L800 750L825 766zM930 766L960 735L1025 730L1050 645L1150 670L1175 715L1250 745L1275 766zM1520 766V760L1568 730V766z"/>
<path fill="url(#pp)" d="M680 685L720 700L760 705L800 750L850 785L880 745L920 743L830 720L760 685L700 672zM1175 715L1250 745L1300 770L1400 785L1350 740L1240 690L1150 670z"/>
<path fill="url(#pn)" d="M1290 766L1300 780L1340 775L1420 815L1470 795L1520 766z"/>
<path stroke="#0000ee" stroke-width="1.6" d="M70 766H1568"/>
<path stroke="#aa00aa" stroke-width="3.5" d="M120 725L150 745L190 750L220 785M280 770L300 785M320 780L350 755M510 745L530 770L550 775M650 670L680 685L720 700L760 705L800 750L850 785M1050 645L1090 660L1150 670M1175 715L1200 725L1250 745L1300 780M1340 775L1380 790L1420 815"/>
<path stroke="#000044" stroke-width="3.5" d="M70 740L120 725M220 785L250 765L280 770M300 785L320 780M350 755L380 730L410 745L480 755L510 745M550 775L575 750L600 680L650 670M850 785L880 770L930 772L960 735L1025 730L1050 645M1150 670L1175 715M1300 780L1340 775M1420 815L1470 795L1520 760L1568 730"/>
<path stroke="#77ee77" stroke-width="3.5" d="M70 778L120 745L165 740M340 765L400 740M570 760L610 710L660 670M920 743L960 725M1030 722L1100 665M1470 797L1520 760L1568 740"/>
<path stroke="#ff9911" stroke-width="3.5" d="M165 740L210 765L250 770L300 765L340 765M400 740L450 745L520 745L570 760M660 670L760 685L830 720L880 740L920 743M960 725L1030 722M1100 665L1150 660L1240 690L1350 740L1420 790L1470 797"/>
<polyline stroke="none" points="250,772 350,760 448,745 505,745 575,752 958,724 1028,718 1467,797" marker-start="url(#ac)" marker-mid="url(#ac)" marker-end="url(#ac)"/>
<polyline stroke="none" points="165,740 278,767 405,738 478,747 518,752 660,670 985,732 1100,665" marker-start="url(#ay)" marker-mid="url(#ay)" marker-end="url(#ay)"/>
</g>
<g transform="translate(640,660) scale(.40816,.33333)" fill="none">
<path fill="url(#ps)" d="M0 766V735L30 730L60 750L100 735L180 745L215 720L310 750L350 750L400 715L450 705L560 755L590 766zM900 766L990 745L1060 760L1390 730L1440 755L1490 766z"/>
<path fill="url(#pp)" d="M500 720L560 755L640 765L680 770L600 745L500 695zM280 710L340 740L310 750L250 730z"/>
<path fill="url(#pn)" d="M600 766L640 790L670 790L710 766zM775 766L815 825L840 810L890 766z"/>
<path stroke="#0000ee" stroke-width="1.6" d="M0 766H1568"/>
<path stroke="#aa00aa" stroke-width="3.5" d="M30 730L60 750M215 720L250 730L310 750M450 705L500 720L560 755L640 790M770 745L815 825M1390 730L1440 755L1480 760L1510 785"/>
<path stroke="#000044" stroke-width="3.5" d="M0 735L30 730M60 750L100 735L130 745L180 745L215 720M310 750L350 750L400 715L450 705M640 790L670 790L720 745L770 745M815 825L840 810L900 760L940 755L990 745L1030 745L1060 760L1200 765L1250 760L1330 755L1390 730M1510 785L1568 775"/>
<path stroke="#77ee77" stroke-width="3.5" d="M0 762L150 735M210 737L280 707M350 735L400 720L470 695M680 770L720 750L760 745M845 810L900 780L960 760L1050 755M1170 765L1250 755L1400 740"/>
<path stroke="#ff9911" stroke-width="3.5" d="M150 735L210 737M280 707L350 735M470 695L500 695L600 745L680 770M760 745L810 790L845 810M1050 755L1100 760L1170 765M1400 740L1500 760L1568 770"/>
<polyline stroke="none" points="225,727 395,722 720,752 848,795 1102,752 1172,765 1270,755 1342,752" marker-start="url(#ac)" marker-mid="url(#ac)" marker-end="url(#ac)"/>
<polyline stroke="none" points="153,735 253,718 408,712 762,746 1058,758 1128,767 1215,760 1312,752 1425,745" marker-start="url(#ay)" marker-mid="url(#ay)" marker-end="url(#ay)"/>
</g>
<g transform="translate(1276,660) scale(.40816,.33333)" fill="none">
<path fill="url(#pn)" d="M60 766L100 795L125 800L170 790L200 766z"/>
<path stroke="#0000ee" stroke-width="1.6" d="M0 766H295"/>
<path stroke="#aa00aa" stroke-width="3.5" d="M40 770L100 795L125 800M210 765L293 765"/>
<path stroke="#000044" stroke-width="3.5" d="M0 775L40 770M125 800L170 790L210 765M250 772L293 772"/>
<path stroke="#77ee77" stroke-width="3.5" d="M0 770L40 762M165 795L200 785L250 775"/>
<path stroke="#ff9911" stroke-width="3.5" d="M40 762L90 780L140 800L165 795M250 775L293 785"/>
<polyline stroke="none" points="167,797 167,797" marker-start="url(#ac)"/>
</g>

<!-- pane 5 -->
<rect x="28" y="939" width="612" height="56" fill="#aaeaff"/>
<rect x="640" y="939" width="757" height="56" fill="#ffff88"/>
<g transform="translate(0,660) scale(.40816,.33333)" fill="none" stroke-width="56">
<path stroke="#6666bb" d="M70 921H85M100 921H115M127 921H142M186 921H255M269 921H284M326 921H355M426 921H440M525 921H540M553 921H625M653 921H667M765 921H795M850 921H878M936 921H1048M1161 921H1190M1360 921H1388M1401 921H1443M1542 921H1558"/>
<path stroke="#ffff88" d="M468 921H510M892 921H922"/>
<path stroke="#660000" d="M510 921H525M922 921H936"/>
<path fill="url(#pr)" stroke="none" d="M70 1005V945L180 952L225 925L255 925L300 935L330 945L360 937L420 962L510 965L545 965L600 920L625 925L680 935L760 960L850 965L920 965L960 910L1035 848L1100 865L1160 905L1190 890L1300 950L1350 960L1400 940L1440 938L1568 960V1005z"/>
<path fill="url(#pb)" stroke="none" d="M70 1005V945H85V1005zM100 1005V945H115V1005zM127 1005V945H142V1005zM186 1005V950L225 925L255 925V1005zM326 1005V945L355 938V1005zM426 1005V960H440V1005zM510 1005V965H540V1005zM553 1005V960L600 920L625 925V1005zM765 1005V955H795V1005zM850 1005V965H878V1005zM920 1005V965L960 910L1035 848L1048 848V1005zM1161 1005V895L1190 890V1005zM1360 1005V950H1388V1005zM1401 1005V940L1443 938V1005zM1542 1005V955H1558V1005z"/>
</g>
<g transform="translate(640,660) scale(.40816,.33333)" fill="none" stroke-width="56">
<path stroke="#aaeaff" d="M0 921H17M75 921H103M245 921H272M287 921H314M372 921H385M400 921H414M838 921H924"/>
<path stroke="#660000" d="M47 921H61M230 921H245M343 921H358M796 921H810"/>
<path stroke="#6666bb" d="M61 921H75M103 921H160M216 921H230M272 921H287M358 921H372M385 921H400M782 921H796M810 921H838"/>
<path stroke="#44ff44" d="M202 921H216M470 921H485M512 921H541M556 921H569M612 921H670M684 921H710M768 921H782M952 921H966M980 921H995M1078 921H1093M1107 921H1150M1205 921H1235M1250 921H1262M1290 921H1305M1318 921H1333M1376 921H1433M1475 921H1502"/>
<path fill="url(#pr)" stroke="none" d="M0 1005V965L50 960L70 965L160 962L215 970L230 960L280 960L340 965L410 965L470 975L600 995L620 985L660 970L760 975L790 960L825 940L870 955L920 960L1000 972L1060 990L1100 980L1170 975L1200 990L1300 985L1370 995L1420 972L1500 980L1568 990V1005z"/>
<path fill="url(#pb)" stroke="none" d="M40 1005V960H75V1005zM100 1005V965H115V1005zM140 1005V962H160V1005zM200 1005V968L230 960V1005zM272 1005V960H287V1005zM343 1005V965H372V1005zM385 1005V965H400V1005zM470 1005V975H485V1005zM525 1005V985H540V1005zM550 1005V985H569V1005zM612 1005V988L660 970H670V1005zM684 1005V975H710V1005zM768 1005V975L790 960L825 940H838V1005zM950 1005V972H966V1005zM1078 1005V982L1130 975V1005zM1205 1005V985H1235V1005zM1250 1005V978H1262V1005zM1290 1005V985H1305V1005zM1318 1005V985H1333V1005zM1376 1005V990L1420 972L1433 972V1005zM1475 1005V978H1502V1005z"/>
</g>
<g transform="translate(1276,660) scale(.40816,.33333)" fill="none" stroke-width="56">
<path stroke="#44ff44" d="M15 921H29M59 921H130M142 921H171M198 921H213"/>
<path fill="url(#pr)" stroke="none" d="M0 1005V992L60 990L100 985L115 978L200 982L260 995L300 1000V1005z"/>
<path fill="url(#pb)" stroke="none" d="M15 1005V988H29V1005zM59 1005V990L100 985L115 978H130V1005zM142 1005V980H171V1005zM198 1005V982H213V1005z"/>
</g>
<path stroke="#000" fill="none" d="M28 984.5H1396"/>

<!-- pane frames -->
<rect x="1873" y="23" width="43" height="987" fill="#fff"/>
<rect x="28" y="995" width="1888" height="15" fill="#fff"/>
<path fill="none" stroke="#7d9099" stroke-width="1.6" d="M28 673.5H1916M28 779.5H1916M28 869.5H1916M28 939.5H1916"/>
<path fill="none" stroke="#7d9099" d="M28 995.5H1872"/>
<path fill="none" stroke="#6f8793" stroke-width="2" d="M1872 23V995"/>

<!-- pane titles -->
<g fill="#a9c4d1" stroke="#8da6b2">
<rect x="28.500" y="674.500" width="149" height="14"/>
<rect x="28.500" y="781.500" width="73" height="14"/>
<rect x="28.500" y="871.500" width="126" height="14"/>
<rect x="28.500" y="941.500" width="175" height="14"/>
</g>
<path d="M33 677h3v9h-3z" fill="#000"/><path d="M36 677h3v9h-3z" fill="#667"/>
<path d="M32 784h7v8h-7zM32 874h7v8h-7z" fill="#6d8694"/>
<path d="M33 944h3v9h-3z" fill="#000"/><path d="M36 944h3v9h-3z" fill="#667"/>
<text x="44" y="685">Sistema de trenes Doc v4 (f f)</text>
<text x="43" y="792">Willy Doc (t)</text>
<text x="43" y="882">Awesome Evolution Doc</text>
<text x="43" y="952">Barra Fuerza Fondo Mercado v4 (f)</text>

<!-- date axis -->
<path fill="none" stroke="#666" d="M43 995V998M84 995V998M130 995V998M159 995V998M188 995V998M222 995V998M251 995V998M280 995V998M309 995V998M338 995V998M373 995V998M396 995V998M430 995V998M459 995V998M488 995V998M522 995V998M546 995V998M575 995V998M604 995V998M640 995V998M673 995V998M696 995V998M725 995V998M754 995V998M783 995V998M824 995V998M846 995V998M875 995V998M904 995V998M933 995V998M979 995V998M1019 995V998M1054 995V998M1083 995V998M1130 995V998M1169 995V998M1198 995V998M1227 995V998M1279 995V998M1320 995V998M1348 995V998M1377 995V998M1412 995V998M1441 995V998M1481 995V998M1516 995V998M1551 995V998M1585 995V998M1614 995V998M1654 995V998M1689 995V998M1724 995V998M1758 995V998M1793 995V998M1828 995V998M1862 995V998"/>
<g text-anchor="middle">
<text x="43" y="1009">24</text><text x="84" y="1009">feb</text><text x="130" y="1009">11</text><text x="159" y="1009">17</text><text x="188" y="1009">23</text><text x="222" y="1009">mar</text><text x="251" y="1009">07</text><text x="280" y="1009">13</text><text x="309" y="1009">19</text><text x="338" y="1009">25</text><text x="373" y="1009">abr</text><text x="396" y="1009">06</text><text x="430" y="1009">13</text><text x="459" y="1009">18</text><text x="488" y="1009">24</text><text x="522" y="1009">may</text><text x="546" y="1009">06</text><text x="575" y="1009">12</text><text x="604" y="1009">18</text><text x="640" y="1009">25</text><text x="673" y="1009">jun</text><text x="696" y="1009">05</text><text x="725" y="1009">11</text><text x="754" y="1009">17</text><text x="783" y="1009">23</text><text x="824" y="1009">jul</text><text x="846" y="1009">06</text><text x="875" y="1009">11</text><text x="904" y="1009">17</text><text x="933" y="1009">23</text><text x="979" y="1009">ago</text><text x="1019" y="1009">10</text><text x="1054" y="1009">17</text><text x="1083" y="1009">22</text><text x="1130" y="1009">sept</text><text x="1169" y="1009">09</text><text x="1198" y="1009">15</text><text x="1227" y="1009">21</text><text x="1279" y="1009">oct</text><text x="1320" y="1009">09</text><text x="1348" y="1009">15</text><text x="1377" y="1009">21</text><text x="1412" y="1009">27</text><text x="1441" y="1009">nov</text><text x="1481" y="1009">08</text><text x="1516" y="1009">14</text><text x="1551" y="1009">20</text><text x="1585" y="1009">26</text><text x="1614" y="1009">dic</text><text x="1654" y="1009">08</text><text x="1689" y="1009">14</text><text x="1724" y="1009">20</text><text x="1758" y="1009">26</text><text x="1793" y="1009">2026</text><text x="1828" y="1009">07</text><text x="1862" y="1009">13</text>
</g>

<!-- right axis -->
<path fill="none" stroke="#333" d="M1873 52H1877M1873 116H1877M1873 248H1877M1873 313H1877M1873 378H1877M1873 443H1877M1873 508H1877M1873 573H1877M1873 638H1877M1873 682H1877M1873 701H1877M1873 756H1877M1873 774H1877M1873 787H1877M1873 806H1877M1873 826H1877M1873 865H1877M1873 878H1877M1873 896H1877M1873 945H1877M1873 965H1877"/>
<path fill="none" stroke="#b8860b" d="M1873 154H1877"/><path fill="none" stroke="#cc0000" stroke-width="2" d="M1873 847H1877M1873 170H1877"/>
<text x="1881" y="55">1,2</text><text x="1881" y="120">1,18</text><text x="1881" y="251">1,14</text><text x="1881" y="316">1,12</text><text x="1881" y="381">1,1</text><text x="1881" y="446">1,08</text><text x="1881" y="511">1,06</text><text x="1881" y="576">1,04</text><text x="1881" y="641">1,02</text>
<rect class="ax" x="1877.500" y="147.500" width="37" height="14"/><text x="1879" y="158" style="fill:#b8860b;stroke:#b8860b">1,16863</text>
<rect class="ax" x="1877.500" y="162.500" width="37" height="12"/><text x="1879" y="172" style="fill:#cc2222;stroke:#cc2222">1,16388</text>
<rect class="ax" x="1877.500" y="173.500" width="37" height="11"/><text x="1879" y="183">1,16278</text>

<rect class="ax" x="1877.500" y="676.500" width="19" height="12"/><text x="1879" y="686">100</text>
<rect class="ax" x="1877.500" y="696.500" width="13" height="12"/><text x="1879" y="706">80</text>
<rect class="ax" x="1877.500" y="718.500" width="13" height="12"/><text x="1879" y="728" style="fill:#0000aa;stroke:#0000aa">50</text>
<rect class="ax" x="1877.500" y="727.500" width="31" height="12"/><text x="1879" y="737" style="fill:#0000aa;stroke:#0000aa">43,164</text>
<rect class="ax" x="1877.500" y="738.500" width="31" height="12"/><text x="1879" y="749">32,191</text>
<rect class="ax" x="1877.500" y="753.500" width="13" height="10"/><text x="1879" y="762">20</text>
<rect class="ax" x="1877.500" y="766.500" width="7" height="11"/><text x="1879" y="776">0</text>
<rect class="ax" x="1877.500" y="782.500" width="7" height="11"/><text x="1879" y="792">0</text>
<rect class="ax" x="1877.500" y="799.500" width="18" height="13"/><text x="1879" y="810" style="fill:#0000aa;stroke:#0000aa">-25</text>
<rect class="ax" x="1877.500" y="820.500" width="18" height="13"/><text x="1879" y="831" style="fill:#0000aa;stroke:#0000aa">-50</text>
<rect class="ax" x="1877.500" y="835.500" width="18" height="8"/>
<rect class="ax" x="1877.500" y="842.500" width="35" height="13"/><text x="1879" y="853" style="fill:#aa0000;stroke:#aa0000">-77,412</text>
<rect class="ax" x="1877.500" y="857.500" width="21" height="11"/><text x="1879" y="867">-100</text>
<text x="1879" y="881.500">0,04</text><text x="1879" y="899.500">0,02</text>
<rect class="ax" x="1877.500" y="903.500" width="7" height="10"/>
<rect class="ax" x="1877.500" y="911.500" width="36" height="12"/><text x="1879" y="921" style="fill:#ee2222;stroke:#ee2222">-0,0070</text>
<rect class="ax" x="1877.500" y="923.500" width="36" height="11"/><text x="1879" y="932" style="fill:#ff9911;stroke:#ff9911">-0,0070</text>
<text x="1879" y="948.500">0,50004</text><text x="1879" y="968.500">0,50002</text>
<rect class="ax" x="1877.500" y="973.500" width="36" height="12"/><text x="1879" y="983">0,50000</text>
<rect class="ax" x="1877.500" y="985.500" width="36" height="9"/><text x="1879" y="993.500" style="fill:#ee0000;stroke:#ee0000">0,49999</text>

<!-- sidebar -->
<rect x="0" y="22" width="28" height="1008" fill="#98b6c5"/>
<path stroke="#5f7f8f" fill="none" d="M27.500 22V1030M.5 22V1030"/>
<rect x="1" y="23" width="26" height="11" fill="#abc6d3"/>
<path fill="none" stroke="#6d8694" d="M11 30l3-3 3 3M1 34.500H27"/>
<rect x="3.500" y="35.500" width="21" height="21" rx="3" fill="#8ea9b6" stroke="#6d8694"/>
<path d="M11 41l8 8-4 0 2 5-2 1-2-5-3 3z" fill="#9aa5ac" stroke="#555" stroke-width=".6"/>
<g fill="none" stroke="#333" stroke-width="1.2"><circle cx="13" cy="67" r="4.500"/><path d="M16 70l4 5"/><circle cx="15" cy="89" r="4.500"/><path d="M18 92l3 4"/></g>
<path fill="none" stroke="#2277cc" stroke-dasharray="2 1" d="M6 87h8v10h-8z"/>
<path d="M14 105c4 0 5 3 5 8l2 3H7l2-3c0-5 1-8 5-8zM14 127c4 0 5 3 5 8l2 3H7l2-3c0-5 1-8 5-8z" fill="#ffe020" stroke="#888" stroke-width=".6"/>
<path fill="none" stroke="#2255cc" d="M7 104h12M17 104l5 5M22 104l-5 5"/>
<path d="M14 138a2 2 0 0 0 3 0z" fill="#888"/>
<path fill="none" stroke="#1144bb" stroke-width="1.5" d="M6 160L9 150 12 160M12 156h8"/><path fill="none" stroke="#ee6644" d="M12 152h10"/>
<path fill="none" stroke="#ff8844" d="M9 178h4M15 178h6"/>
<text x="19" y="186" style="fill:#1144bb;stroke:#1144bb;font-weight:bold">F</text><text x="19" y="163" style="fill:#1144bb;stroke:#1144bb;font-weight:bold">F</text>
<rect x="8" y="195" width="12" height="10" fill="none" stroke="#1144bb"/>
<rect x="8" y="217" width="12" height="10" fill="#bb8899" stroke="#dd2222" stroke-width="1.2"/>
<path fill="#1144bb" d="M6 203h4v3H6zM19 193h3v3h-3zM6 225h4v3H6zM19 215h3v3h-3z"/>
<path fill="none" stroke="#222" stroke-width="2" d="M8 250L20 238"/><path d="M22 236l-7 1 5 5z" fill="#222"/>
<rect x="8" y="259" width="13" height="14" rx="3" fill="#c5d8e2" stroke="#6699ee"/><text x="11" y="270" class="b">T</text>
<circle cx="14" cy="288" r="7" fill="#c5d8e2" stroke="#6699ee"/><text x="11" y="292" class="b" style="fill:#119911;stroke:none">T</text>
<path fill="none" stroke="#333" stroke-width="1.2" d="M10 314L20 304"/><circle cx="10" cy="314" r="2" fill="none" stroke="#333"/><circle cx="19" cy="305" r="2" fill="none" stroke="#333"/>
<path stroke="#44aa44" fill="none" stroke-width="2" d="M12 332H23"/><circle cx="12" cy="332" r="1.500" fill="#98b6c5" stroke="#44aa44"/>
<path stroke="#ee2222" fill="none" stroke-width="2" d="M12 353H23"/><circle cx="12" cy="353" r="1.500" fill="#98b6c5" stroke="#ee2222"/>
<path d="M7 380L19 369l4 4-12 11z" fill="#b5c5cd" stroke="#445"/>
<rect x="6" y="390" width="16" height="16" fill="#8ba4c4"/><path fill="none" stroke="#fff" d="M7 405l5-7 3 3 6-7"/>
<g stroke-width="1.4">
<ellipse cx="14" cy="419" rx="7" ry="5" fill="#cc8899" stroke="#ee2222"/>
<ellipse cx="14" cy="442" rx="7" ry="5" fill="#889988" stroke="#885533"/>
<ellipse cx="14" cy="464" rx="7" ry="5" fill="#669988" stroke="#226622"/>
<ellipse cx="14" cy="485" rx="7" ry="5" fill="#77cc99" stroke="#00dd00"/></g>
<path fill="#1144bb" d="M6 423h3v3H6zM20 414h2v3h-2zM6 446h3v3H6zM20 437h2v3h-2zM6 468h3v3H6zM20 459h2v3h-2zM6 489h3v3H6zM20 480h2v3h-2z"/>
<g fill="none">
<path stroke="#111" d="M6 516L22 500"/><path stroke="#44aa44" stroke-width="1.4" d="M6 538L22 522"/><path stroke="#ee2222" stroke-width="1.4" d="M6 560L22 544"/>
<path stroke="#111" d="M5 574H23"/><path stroke="#ee8877" stroke-width="2" d="M5 596H23"/><path stroke="#00ee00" stroke-width="2" d="M5 618H23"/><path stroke="#117711" stroke-width="2" d="M5 640H23"/><path stroke="#ee1111" stroke-width="2" d="M5 662H23"/><path stroke="#6699ee" stroke-width="2" d="M5 684H23"/><path stroke="#000099" stroke-width="2" d="M5 706H23"/><path stroke="#111" stroke-width="1.2" d="M14 720V737"/>
<path stroke="#ee6655" d="M6 755L17 744M6 755H23"/><circle cx="14" cy="771" r="5.500" stroke="#dd7744"/><path stroke="#2255cc" d="M11 771h6M14 768v6M20 765h3"/>
</g>
<text x="5" y="793" style="font-size:8px;fill:#2255cc;stroke:none">a+b</text><text x="6" y="801" style="font-size:8px;fill:#2255cc;stroke:none">+2</text>
<text x="5" y="817" style="font-size:8px;fill:#2255cc;stroke:none">+b</text><text x="7" y="825" style="font-size:8px;fill:#2255cc;stroke:none">c+</text>
<path d="M7 838l5 6 10-13-9 8-3-3z" fill="#44cc44" stroke="#228822" stroke-width=".6"/>
<path d="M7 859h4v9H7zM12 859l3-8 2 2-1 5h6l-2 10h-8z" fill="#66cc44" stroke="#338822" stroke-width=".5"/>
<path fill="none" stroke="#ee1111" stroke-width="4" d="M8 876L20 888M20 876L8 888"/>
<path d="M14 897l7 14H7z" fill="#ffcc33" stroke="#aa7722" stroke-width=".8"/><path d="M14 901v6M14 908v2" stroke="#aa4411" fill="none"/>
<path d="M14 919l6 7h-3.500v7h-5v-7H8z" fill="#33aa44"/>
<rect x="1" y="945" width="26" height="10" fill="#abc6d3"/><path fill="none" stroke="#333" d="M11 948l3 3 3-3"/>
<rect x="9" y="962" width="13" height="15" fill="#eee" stroke="#777"/><circle cx="10" cy="963" r="3.500" fill="#22aa33"/><path fill="none" stroke="#222" d="M13 972l6 4M17 968l3 3"/>
<text x="8" y="999" class="b" style="font-size:9px">...</text><path d="M15 1002h6l-3 3z" fill="#333"/>

<!-- bottom bar -->
<rect x="0" y="1010" width="1916" height="20" fill="#9ab7c5"/>
<path fill="none" stroke="#6c8896" d="M0 1010.500H1916M160 1014.500H1751M160 1026.500H1751M27.500 1010V1030"/>
<rect x="1674" y="1015" width="45" height="11" fill="#bcd3de"/>
<rect x="148.500" y="1014.500" width="12" height="12" fill="#c5d8e2" stroke="#6c8896"/><path fill="none" stroke="#222" d="M156 1018l-3 2.500 3 2.500"/>
<rect x="1751.500" y="1014.500" width="13" height="12" fill="#c5d8e2" stroke="#6c8896"/><path fill="none" stroke="#222" d="M1756 1018l3 2.500-3 2.500"/>
<path d="M8 1028L17 1012 20 1014 12 1028z" fill="#e8c040" stroke="#555" stroke-width=".5"/><path d="M8 1012v14" stroke="#cc2222" fill="none"/>
<path fill="none" stroke="#eef" stroke-width="1.5" d="M43 1014l-7 5 7 6"/><circle cx="43" cy="1014" r="2" fill="#eef"/><circle cx="36" cy="1019" r="2" fill="#eef"/><circle cx="43" cy="1026" r="2" fill="#eef"/>
<rect x="54" y="1014" width="12" height="11" rx="2" fill="#3388dd"/><rect x="53" y="1012" width="6" height="5" fill="#ddd"/>
<rect x="75" y="1012" width="10" height="15" fill="#eee" stroke="#556"/><path fill="none" stroke="#cc2222" d="M77 1016h6"/><path fill="none" stroke="#229933" d="M77 1020h6M77 1023h6"/>
<path fill="#229933" d="M100 1011h3v18h-3zM95 1014h12v3H95zM97 1020h11v3H97z"/><path fill="#dd3333" d="M95 1024h8v2h-8z"/>
<rect x="116" y="1012" width="10" height="10" fill="#eee" stroke="#2255aa"/><rect x="119" y="1017" width="10" height="10" fill="#eee" stroke="#2255aa"/><path fill="none" stroke="#229933" d="M121 1024l3-3 3 2"/>
<text x="135" y="1024" style="fill:#556;stroke:#556">«</text>
<path fill="none" stroke="#2266bb" stroke-width="2.5" d="M1774 1017h6c4 0 5 4 4 9"/><path d="M1776 1012v9l-5-4z" fill="#2266bb"/>
<path fill="none" stroke="#7fa2c4" stroke-width="2.5" d="M1805 1017h-6c-4 0-5 4-4 9"/><path d="M1803 1012v9l5-4z" fill="#7fa2c4"/>
<path d="M1816 1026l4-10 4 4-4 7z" fill="#eee" stroke="#222" stroke-width=".8"/><path d="M1824 1012l4 2v9l-4-1z" fill="#229933"/>
<g fill="none" stroke="#222" stroke-width="1.4"><circle cx="1841" cy="1018" r="4.500" fill="#dde"/><path d="M1844 1022l3 4"/><circle cx="1864" cy="1018" r="4.500" fill="#dde"/><path d="M1867 1022l3 4"/><circle cx="1885" cy="1018" r="4.500" fill="#dde"/><path d="M1888 1022l3 4"/></g>
<path fill="none" stroke="#2266bb" stroke-width="1.3" d="M1851 1013v6M1838 1027h8M1862 1018h4M1883 1018h4M1885 1016v4"/>
<path fill="none" stroke="#444" stroke-dasharray="1 1" stroke-width="2" d="M1903 1014h13"/><path d="M1909 1017v6h-3l4 4 4-4h-3v-6z" fill="#2266bb"/>

<!-- toolbar -->
<rect x="0" y="0" width="1916" height="22" fill="url(#tb)"/>
<path fill="none" stroke="#5d7987" d="M0 .5H1916"/><path fill="none" stroke="#5d7987" stroke-width="1.6" d="M0 22H1916"/>
<path fill="none" stroke="#92adba" d="M22.500 1V21M38.500 1V21M100.500 1V21M316.500 1V21M358.500 1V21M450.500 1V21M535.500 1V21M620.500 1V21M636.500 1V21M1851.500 1V21M1871.500 1V21"/>
<path d="M7 16h2v-5H7zM11 14h2V8h-2zM15 12h2V5h-2z" fill="#55aa44"/><path fill="none" stroke="#447733" d="M8 9v9M12 6v10M16 3v11"/>
<path d="M27 5h6v5h-6zM27 13h6v5h-6z" fill="#8aa2ae" stroke="#667"/>
<text x="43" y="15">EURUSD</text><path fill="none" stroke="#333" d="M88 10l2.500 2.500 2.500-2.500"/>
<g>
<rect class="btn" x="104.500" y="4.500" width="24" height="14" rx="2"/>
<rect class="btn" x="133.500" y="4.500" width="18" height="14" rx="2"/>
<rect class="btn" x="155.500" y="4.500" width="23" height="14" rx="2"/>
<rect class="btn" x="182.500" y="4.500" width="23" height="14" rx="2"/>
<rect class="btn" x="209.500" y="4.500" width="16" height="14" rx="2"/>
<rect class="btn" x="229.500" y="4.500" width="16" height="14" rx="2"/>
<rect x="249.500" y="4.500" width="13" height="14" rx="2" fill="#8ea9b6" stroke="#6d8694"/>
<rect class="btn" x="265.500" y="4.500" width="15" height="14" rx="2"/>
<rect class="btn" x="284.500" y="4.500" width="12" height="14" rx="2"/>
<rect class="btn" x="299.500" y="4.500" width="13" height="14" rx="2"/>
<rect class="btn" x="362.500" y="4.500" width="22" height="14" rx="2"/>
<rect x="389.500" y="4.500" width="26" height="14" rx="2" fill="#8ea9b6" stroke="#6d8694"/>
<rect class="btn" x="420.500" y="4.500" width="26" height="14" rx="2"/>
</g>
<g text-anchor="middle">
<text x="116.500" y="15">144s</text><text x="142.500" y="15">1m</text><text x="167" y="15">12m</text><text x="194" y="15">56m</text><text x="217.500" y="15">1h</text><text x="237.500" y="15">4h</text><text x="256" y="15">D</text><text x="273" y="15">W</text><text x="290.500" y="15">M</text><text x="306" y="15">Q</text><text x="373.500" y="15">5kU</text><text x="402.500" y="15">10kU</text><text x="433.500" y="15">35kU</text>
</g>
<text x="321" y="15">1 día</text><path fill="none" stroke="#333" d="M349 10l2.500 2.500 2.500-2.500"/>
<text x="455" y="15">10 k unidades</text><path fill="none" stroke="#333" d="M525 10l2.500 2.500 2.500-2.500"/>
<path d="M541 18h3v-3h-3zM546 18h3v-4h-3zM551 18h3v-3h-3z" fill="#cc4444"/><path fill="none" stroke="#33aa33" stroke-width="1.2" d="M540 9l6-4 4 6 7 1"/><path fill="none" stroke="#cc4444" d="M540 12l6-3 4 4 7-4"/>
<text x="561" y="15">Indicadores</text><path fill="none" stroke="#333" d="M623 10l2.500 2.500 2.500-2.500"/>
<rect x="641" y="6" width="8" height="11" fill="#eee" stroke="#889"/><text x="643.500" y="15" style="fill:#667;stroke:#667">i</text>
<circle cx="663" cy="11" r="3" fill="#8a99a4" stroke="#778"/>
<rect x="672" y="4" width="39" height="14" rx="2" fill="#55dd55" stroke="#77bb77"/><text x="675" y="15" style="fill:#e8ffe8;stroke:#e8ffe8">+0,08 %</text>
<text x="716" y="15">24 oct 2025</text>
<rect x="770.500" y="4.500" width="48" height="13" rx="4" fill="#66bbee" stroke="#5599cc"/><text x="773" y="15" style="fill:#224;stroke:#224">EUR/USD</text>
<path fill="none" stroke="#ee2222" stroke-width="1.4" d="M1862 6c-5 0-6 3-6 6"/><path d="M1853 11h6l-3 5z" fill="#ee2222"/>
<path fill="none" stroke="#22aa33" stroke-width="1.4" d="M1859 17c5 0 6-3 6-6"/><path d="M1862 12h6l-3-5z" fill="#22aa33"/>
<path fill="none" stroke="#86a0ae" stroke-width="1.3" d="M1877 16h8M1891 9h6v6h-6zM1893 9V6h6v6h-2M1904 7l7 9M1911 7l-7 9"/>

<!-- legend row -->
<rect x="28" y="23" width="552" height="15" fill="#a9c4d1"/>
<path fill="none" stroke="#8da6b2" d="M28 37.500H580M579.500 23V38M58.500 23V38M106.500 23V38M122.500 23V38M186.500 23V38M323.500 23V38M438.500 23V38"/>
<rect x="30" y="25" width="12" height="11" fill="#f4f4f4" stroke="#8da6b2"/><rect x="44" y="25" width="12" height="11" fill="#f4f4f4" stroke="#8da6b2"/>
<path d="M34 26h4v4h2l-4 5-4-5h2z" fill="#dd2222"/><path d="M48 35h4v-4h2l-4-5-4 5h2z" fill="#22aa33"/>
<rect x="62.500" y="26.500" width="7" height="8" fill="#cfe0e8" stroke="#667"/>
<text x="74" y="34">Precio</text>
<path fill="none" stroke="#333" d="M113 27h6M113 30h6M113 33h6"/><path fill="none" stroke="#333" d="M110 27h2M110 30h2M110 33h2"/>
<rect x="127.500" y="26.500" width="7" height="8" fill="#cfe0e8" stroke="#667"/>
<text x="138" y="34">Cierre (W)</text>
<rect x="190" y="26" width="8" height="9" fill="#6d8694"/>
<text x="202" y="34">Tunel Domenec v4 (t t t t t)</text>
<rect x="327" y="26" width="2" height="9" fill="#cc2222"/><rect x="329" y="26" width="2" height="9" fill="#2233aa"/><rect x="331" y="26" width="2" height="9" fill="#ee11cc"/><rect x="333" y="26" width="2" height="9" fill="#cc2222"/>
<text x="339" y="34">Control Total Doc v.6</text>
<rect x="442" y="26" width="8" height="9" fill="#000"/>
<text x="453" y="34">Multi Avisos (3 f 3 1,5 70 f f)</text>
</svg>
</body></html>
